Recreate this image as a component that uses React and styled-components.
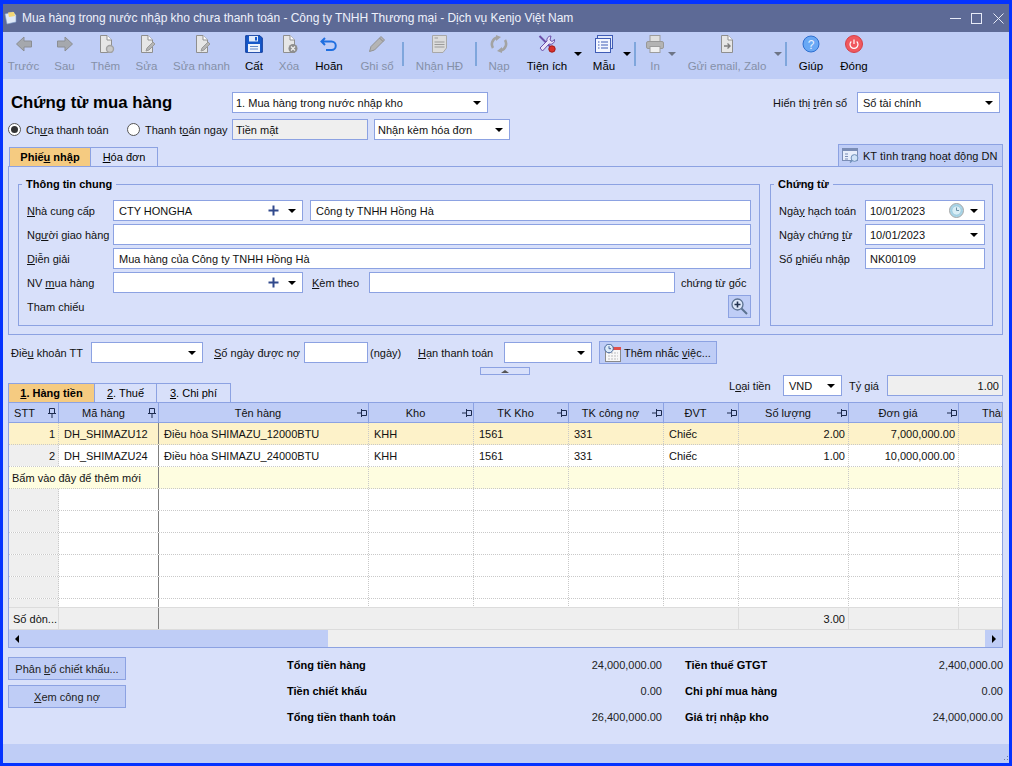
import React from 'react';
import styled, { createGlobalStyle } from 'styled-components';

const line = '#8ca2e2';
const soft = '#bfcdf6';
const pale = '#d8e0fa';

const GlobalStyle = createGlobalStyle`
  html, body { margin: 0; padding: 0; background: #0433ff; overflow: hidden; }
  body { font-family: "Liberation Sans", Arial, sans-serif; font-size: 11px; color: #111; }
  * { box-sizing: border-box; }
  u { text-underline-offset: 1px; }
`;

const Page = styled.div`
  width: 1012px;
  height: 766px;
  display: flex;
  flex-direction: column;
  border-style: solid;
  border-color: #0433ff;
  border-width: 4px 3px 3px 3px;
  background: ${pale};
`;

const TitleBar = styled.div`
  height: 28px;
  flex: none;
  display: flex;
  align-items: center;
  padding-left: 1px;
  background: #5d6a96;
  color: #eef1fb;
  font-size: 12px;
`;

const TitleText = styled.div`
  margin-left: 4px;
  flex: 1;
  white-space: nowrap;
  letter-spacing: -0.03px;
`;

const WinButton = styled.div`
  width: ${(p) => p.$w}px;
  display: flex;
  justify-content: center;
  align-items: center;
`;

const Toolbar = styled.div`
  height: 47px;
  flex: none;
  display: flex;
  align-items: flex-start;
  background: ${soft};
`;

const Tool = styled.div`
  width: ${(p) => p.$w}px;
  flex: none;
  margin-left: ${(p) => p.$ml || 0}px;
  display: flex;
  flex-direction: column;
  align-items: center;
  padding-top: 3px;
  color: ${(p) => (p.$off ? '#8590a8' : '#000')};
  white-space: nowrap;
`;

const ToolLabel = styled.span`
  margin-top: 6px;
  line-height: 15px;
  font-size: 11.5px;
`;

const ToolCaret = styled.div`
  width: 10px;
  flex: none;
  margin-left: ${(p) => p.$ml || 0}px;
  padding-top: 20px;
  display: flex;
  justify-content: center;
`;

const ToolSep = styled.div`
  width: 2px;
  height: 24px;
  flex: none;
  margin-top: 10px;
  margin-left: ${(p) => p.$ml || 0}px;
  background: #7fa6dc;
`;

const Caret = styled.span`
  width: 0;
  height: 0;
  flex: none;
  border-left: 4px solid transparent;
  border-right: 4px solid transparent;
  border-top: 4px solid ${(p) => p.$color || '#000'};
`;

const Body = styled.div`
  flex: 1;
  display: flex;
  flex-direction: column;
  padding: 0 6px 0 5px;
`;

const HeadRow = styled.div`
  height: 21px;
  flex: none;
  margin-top: ${(p) => p.$mt}px;
  display: flex;
  align-items: center;
`;

const DocTitle = styled.h1`
  width: 224px;
  margin: 0;
  padding-left: 3px;
  font-size: 16.8px;
  font-weight: 700;
  color: #000;
  white-space: nowrap;
`;

const Text = styled.span`
  width: ${(p) => (p.$w ? `${p.$w}px` : 'auto')};
  flex: none;
  margin-left: ${(p) => p.$ml || 0}px;
  white-space: nowrap;
`;

const Box = styled.div`
  width: ${(p) => p.$w}px;
  height: 21px;
  flex: none;
  margin-left: ${(p) => p.$ml || 0}px;
  display: flex;
  align-items: center;
  justify-content: ${(p) => (p.$right ? 'flex-end' : 'flex-start')};
  padding: 0 ${(p) => (p.$right ? 3 : 6)}px 0 ${(p) => (p.$pad === undefined ? 5 : p.$pad)}px;
  border: 1px solid ${line};
  background: ${(p) => (p.$gray ? '#efefef' : '#fff')};
  white-space: nowrap;
`;

const BoxText = styled.span`
  flex: 1;
`;

const BoxIcon = styled.span`
  display: flex;
  margin-right: ${(p) => p.$mr}px;
`;

const Radio = styled.span`
  width: 13px;
  height: 13px;
  flex: none;
  margin-left: ${(p) => p.$ml || 0}px;
  margin-right: 5px;
  border-radius: 50%;
  border: 1px solid #555;
  background: #fff;
  display: flex;
  align-items: center;
  justify-content: center;
  &::after {
    content: '';
    width: 7px;
    height: 7px;
    border-radius: 50%;
    background: ${(p) => (p.$on ? '#333' : 'transparent')};
  }
`;

const TabBar = styled.div`
  height: ${(p) => p.$h}px;
  flex: none;
  margin-top: ${(p) => p.$mt || 0}px;
  display: flex;
  align-items: flex-end;
`;

const Tab = styled.div`
  width: ${(p) => p.$w}px;
  height: 19px;
  flex: none;
  margin-left: ${(p) => p.$ml || 0}px;
  display: flex;
  align-items: center;
  justify-content: center;
  border: 1px solid ${line};
  border-bottom: 0;
  border-left-width: ${(p) => (p.$first ? 1 : 0)}px;
  background: ${(p) => (p.$on ? '#f5cb81' : 'transparent')};
  font-weight: ${(p) => (p.$on ? 700 : 400)};
  color: #000;
  white-space: nowrap;
`;

const KtButton = styled.div`
  width: 165px;
  height: 22px;
  margin-left: auto;
  display: flex;
  align-items: center;
  gap: 3px;
  padding-left: 3px;
  border: 1px solid ${line};
  border-bottom: 0;
  background: ${soft};
  white-space: nowrap;
`;

const Panel = styled.div`
  height: 169px;
  flex: none;
  display: flex;
  gap: 10px;
  padding: 10px 9px 0;
  border: 1px solid ${line};
`;

const Group = styled.fieldset`
  width: ${(p) => p.$w}px;
  height: 149px;
  flex: none;
  margin: 0;
  padding: 9px 8px 0;
  min-width: 0;
  border: 1px solid ${line};
`;

const Legend = styled.legend`
  margin-left: -5px;
  padding: 0 4px;
  line-height: 14px;
  font-weight: 700;
  color: #000;
`;

const FieldRow = styled.div`
  height: 21px;
  display: flex;
  align-items: center;
  margin-bottom: 3px;
`;

const RefRow = styled.div`
  height: 23px;
  margin-top: -1px;
  display: flex;
  align-items: center;
  justify-content: space-between;
`;

const ZoomBtn = styled.div`
  width: 23px;
  height: 23px;
  display: flex;
  align-items: center;
  justify-content: center;
  border: 1px solid ${line};
  background: ${soft};
`;

const TermsRow = styled.div`
  height: 21px;
  flex: none;
  margin-top: 7px;
  display: flex;
  align-items: center;
`;

const RemindBtn = styled.div`
  width: 118px;
  height: 23px;
  flex: none;
  margin-left: 7px;
  display: flex;
  align-items: center;
  gap: 3px;
  padding-left: 4px;
  border: 1px solid ${line};
  background: ${soft};
  white-space: nowrap;
`;

const Splitter = styled.div`
  width: 50px;
  height: 8px;
  flex: none;
  margin: 4px 0 0 472px;
  display: flex;
  align-items: center;
  justify-content: center;
  border: 1px solid ${line};
  &::after {
    content: '';
    border-left: 4px solid transparent;
    border-right: 4px solid transparent;
    border-bottom: 3px solid #555;
  }
`;

const RateRow = styled.div`
  margin-left: auto;
  align-self: flex-start;
  display: flex;
  align-items: center;
  height: 21px;
`;

const GridBox = styled.div`
  height: 246px;
  flex: none;
  display: flex;
  flex-direction: column;
  border: 1px solid ${line};
  background: #fff;
  overflow: hidden;
`;

const columns = '50px 100px 210px 105px 95px 95px 75px 110px 110px 43px';

const HeadGrid = styled.div`
  height: 20px;
  flex: none;
  display: grid;
  grid-template-columns: ${columns};
  background: ${soft};
  border-bottom: 1px solid ${line};
`;

const HeadCell = styled.div`
  display: flex;
  align-items: center;
  justify-content: space-between;
  padding: 0 ${(p) => (p.$pinned ? 2 : 1)}px 0 0;
  border-right: 1px solid ${line};
  overflow: hidden;
  &:last-child { border-right: 0; }
`;

const HeadLabel = styled.span`
  flex: ${(p) => (p.$clip ? 'none' : 1)};
  width: ${(p) => (p.$clip ? '98px' : 'auto')};
  text-align: center;
  padding-right: ${(p) => p.$pr || 0}px;
  white-space: nowrap;
`;

const RowsArea = styled.div`
  height: 184px;
  flex: none;
  overflow: hidden;
`;

const DataRow = styled.div`
  height: 22px;
  display: grid;
  grid-template-columns: ${columns};
  border-bottom: 1px dotted #c9c9c9;
  background: ${(p) => p.$bg || '#fff'};
`;

const Cell = styled.div`
  display: flex;
  align-items: center;
  justify-content: ${(p) => (p.$right ? 'flex-end' : 'flex-start')};
  padding: 0 ${(p) => (p.$right ? 3 : 0)}px 0 ${(p) => (p.$right ? 0 : p.$pl || 5)}px;
  border-right: 1px ${(p) => (p.$frozen ? 'solid #7f7f7f' : 'dotted #c9c9c9')};
  background: ${(p) => p.$bg || 'transparent'};
  grid-column: ${(p) => (p.$span ? `span ${p.$span}` : 'auto')};
  white-space: nowrap;
  &:last-child { border-right: 0; }
`;

const TotalRow = styled.div`
  height: 22px;
  flex: none;
  display: grid;
  grid-template-columns: 50px 100px 580px 110px 110px 43px;
  border-top: 1px solid #dcdcdc;
  background: #efefef;
`;

const TotalCell = styled.div`
  display: flex;
  align-items: center;
  justify-content: ${(p) => (p.$right ? 'flex-end' : 'flex-start')};
  padding: 0 3px 0 ${(p) => (p.$right ? 0 : 4)}px;
  border-right: 1px solid ${(p) => (p.$frozen ? '#7f7f7f' : '#dcdcdc')};
  white-space: nowrap;
  &:last-child { border-right: 0; }
`;

const ScrollBar = styled.div`
  height: 18px;
  flex: none;
  display: flex;
  border-top: 1px solid #dcdcdc;
  background: #efefef;
`;

const ScrollThumb = styled.div`
  width: 319px;
  display: flex;
  align-items: center;
  padding-left: 6px;
  background: ${soft};
`;

const ScrollEnd = styled.div`
  width: 17px;
  margin-left: auto;
  display: flex;
  align-items: center;
  justify-content: center;
  background: ${soft};
`;

const ArrowSide = styled.span`
  width: 0;
  height: 0;
  border-top: 4px solid transparent;
  border-bottom: 4px solid transparent;
  ${(p) => (p.$left ? 'border-right: 4px solid #000;' : 'border-left: 4px solid #000;')}
`;

const Bottom = styled.div`
  height: 96px;
  flex: none;
  display: flex;
  align-items: flex-start;
`;

const SideButtons = styled.div`
  width: 118px;
  flex: none;
  display: flex;
  flex-direction: column;
  gap: 5px;
  padding-top: 9px;
`;

const SideButton = styled.div`
  height: 23px;
  display: flex;
  align-items: center;
  justify-content: center;
  border: 1px solid ${line};
  background: ${soft};
  color: #222;
  white-space: nowrap;
`;

const Summary = styled.div`
  margin-left: 161px;
  padding-top: 4px;
  display: grid;
  grid-template-columns: 375px 318px;
  column-gap: 23px;
`;

const SummaryItem = styled.div`
  height: 26px;
  display: flex;
  align-items: center;
  justify-content: space-between;
  color: #222;
  b { color: #000; }
`;

const Footer = styled.div`
  height: 19px;
  flex: none;
  display: flex;
  justify-content: flex-end;
  align-items: flex-end;
  background: ${soft};
`;

const U = ({ children }) => <u>{children}</u>;

const Arrow = ({ flip }) => (
  <svg width="18" height="18" viewBox="0 0 18 18" style={{ transform: flip ? 'scaleX(-1)' : 'none' }}>
    <path d="M1.5 9 L9 2 V6 H16.5 V12 H9 V16 Z" fill="#a5a8ad" stroke="#8b8e93" />
  </svg>
);

const page = 'M3.5 .5 H10 L14.5 5 V17.5 H3.5 Z';
const Doc = ({ children }) => (
  <svg width="18" height="18" viewBox="0 0 18 18">
    <path d={page} fill="#e6e6e6" stroke="#8f8f8f" />
    <path d="M10 .5 V5 H14.5" fill="#fff" stroke="#8f8f8f" />
    {children}
  </svg>
);

const AddIcon = () => (
  <Doc>
    <circle cx="13" cy="14" r="3.5" fill="#c9c9c9" stroke="#a2a2a2" strokeWidth="1.4" />
  </Doc>
);

const EditIcon = () => (
  <Doc>
    <path d="M8 16 L9 13 L15 7 L17 9 L11 15 Z" fill="#b5b5b5" stroke="#9a9a9a" />
  </Doc>
);

const DeleteIcon = () => (
  <Doc>
    <circle cx="13" cy="13.5" r="4.5" fill="#8e8e8e" />
    <path d="M11 11.5 L15 15.5 M15 11.5 L11 15.5" stroke="#eee" strokeWidth="1.3" />
  </Doc>
);

const SaveIcon = () => (
  <svg width="18" height="18" viewBox="0 0 18 18">
    <path d="M.7 .7 H15 L17.3 3 V17.3 H.7 Z" fill="#1658c9" stroke="#0d3a9a" />
    <rect x="4" y="1" width="9" height="5.5" fill="#dfe9fa" />
    <rect x="10" y="2" width="2" height="3.5" fill="#1658c9" />
    <rect x="3" y="9" width="12" height="8" fill="#eef3fc" />
    <path d="M5 11.5 H13 M5 14 H13" stroke="#5f86c9" />
  </svg>
);

const UndoIcon = () => (
  <svg width="18" height="18" viewBox="0 0 18 18">
    <path d="M5 3 L1.5 6.5 L5 10 M2 6.5 H11.5 A4.2 4.2 0 0 1 11.5 15 H6" fill="none" stroke="#1f6fe0" strokeWidth="2" />
  </svg>
);

const PencilIcon = () => (
  <svg width="18" height="18" viewBox="0 0 18 18">
    <path d="M1.5 16.5 L3 11.5 L13 1.5 L16.5 5 L6.5 15 Z" fill="#b4b4b4" stroke="#929292" />
    <path d="M11.5 3 L15 6.5" stroke="#8a8a8a" />
  </svg>
);

const InvoiceIcon = () => (
  <svg width="18" height="18" viewBox="0 0 18 18">
    <path d="M1.5 .5 H15.5 V13 L12 17.5 H1.5 Z" fill="#dcdcdc" stroke="#a8a8a8" />
    <path d="M3.5 3 H7 M3.5 7 H13.5 M3.5 9.5 H13.5 M3.5 12 H13.5" stroke="#9a9a9a" />
  </svg>
);

const ReloadIcon = () => (
  <svg width="18" height="18" viewBox="0 0 18 18">
    <path d="M3 13 A7 7 0 0 1 7 2.5 M15 5 A7 7 0 0 1 11 15.5" fill="none" stroke="#a3a3a3" strokeWidth="2.6" />
    <path d="M6 0 V6 L11 2 Z M12 18 V12 L7 16 Z" fill="#a3a3a3" />
  </svg>
);

const ToolsIcon = () => (
  <svg width="18" height="18" viewBox="0 0 18 18">
    <path d="M1.5 1 L4 3.5 L15 14.5" stroke="#6b4fa8" strokeWidth="2" fill="none" />
    <path d="M13 1 A4 4 0 0 0 9 6 L2 13 L4.5 16 L11 9 A4 4 0 0 0 16.5 4.5 L14 6.5 L12 5 Z" fill="#e8e4f8" stroke="#6b4fa8" />
    <circle cx="14" cy="14" r="3.2" fill="#d9302c" stroke="#a11d1a" />
  </svg>
);

const TemplateIcon = () => (
  <svg width="18" height="18" viewBox="0 0 18 18">
    <rect x="2.5" y=".5" width="15" height="13" fill="#dfe7fb" stroke="#3f5cb5" />
    <rect x=".5" y="3.5" width="15" height="14" fill="#f3f6ff" stroke="#3f5cb5" />
    <path d="M3 7 H4.5 M3 10 H4.5 M3 13 H4.5 M6 7 H13 M6 10 H13 M6 13 H13" stroke="#3f5cb5" />
  </svg>
);

const PrintIcon = () => (
  <svg width="18" height="18" viewBox="0 0 18 18">
    <rect x="4" y=".5" width="10" height="6" fill="#dfdfdf" stroke="#9c9c9c" />
    <rect x=".5" y="6.5" width="17" height="7" rx="1.5" fill="#b3b3b3" stroke="#989898" />
    <rect x="4" y="11.5" width="10" height="6" fill="#efefef" stroke="#9c9c9c" />
  </svg>
);

const SendIcon = () => (
  <Doc>
    <path d="M6 11 H12 M9.5 8.5 L12 11 L9.5 13.5" fill="none" stroke="#7d7d7d" strokeWidth="1.4" />
  </Doc>
);

const HelpIcon = () => (
  <svg width="18" height="18" viewBox="0 0 18 18">
    <circle cx="9" cy="9" r="8" fill="#69a8f5" stroke="#2e6fd0" />
    <text x="9" y="13.5" textAnchor="middle" fontSize="12" fill="#e8f2ff" fontFamily="Liberation Sans">?</text>
  </svg>
);

const PowerIcon = () => (
  <svg width="18" height="18" viewBox="0 0 18 18">
    <circle cx="9" cy="9" r="8.5" fill="#f0585e" stroke="#d53f46" />
    <path d="M6.3 6.5 A4 4 0 1 0 11.7 6.5 M9 4.5 V9" fill="none" stroke="#fff" strokeWidth="1.2" />
  </svg>
);

const AppIcon = () => (
  <svg width="14" height="14" viewBox="0 0 14 14">
    <path d="M1 3 L9 1 L12 4 L12 11 L3 13 Z" fill="#dfe9f7" stroke="#7f9cc9" strokeWidth=".6" />
    <path d="M4 1.5 L10 1 L11 5 L5 6 Z" fill="#f4d774" />
  </svg>
);

const Plus = () => (
  <svg width="11" height="11" viewBox="0 0 11 11">
    <path d="M5.5 .5 V10.5 M.5 5.5 H10.5" stroke="#31498c" strokeWidth="2" />
  </svg>
);

const ClockIcon = () => (
  <svg width="15" height="15" viewBox="0 0 15 15">
    <circle cx="7.5" cy="7.5" r="7" fill="#a9d6e8" stroke="#a8a8a8" />
    <circle cx="7.5" cy="7.5" r="4.6" fill="#d9eef6" stroke="#8fbdd2" strokeWidth=".6" />
    <path d="M7.5 4.5 V7.5 H10" fill="none" stroke="#6a8fa5" />
  </svg>
);

const LookupIcon = () => (
  <svg width="18" height="15" viewBox="0 0 18 15">
    <rect x=".5" y=".5" width="15" height="12" fill="#e8eefb" stroke="#7b8db5" />
    <rect x=".5" y=".5" width="15" height="2.5" fill="#7b8db5" />
    <path d="M3 6 H6 M3 8.5 H6 M3 11 H6" stroke="#7b8db5" />
    <circle cx="12.5" cy="10" r="3.4" fill="#cfe2f7" stroke="#6f8fb8" />
    <path d="M10 12.5 L8 14.5" stroke="#6f8fb8" strokeWidth="1.5" />
  </svg>
);

const MagnifyIcon = () => (
  <svg width="17" height="17" viewBox="0 0 17 17">
    <circle cx="6.5" cy="6.5" r="5.5" fill="#dce6f8" stroke="#5c7291" strokeWidth="1.3" />
    <path d="M6.5 3.5 V9.5 M3.5 6.5 H9.5" stroke="#22324f" strokeWidth="1.6" />
    <path d="M10.5 10.5 L16 16" stroke="#5c7291" strokeWidth="2" />
  </svg>
);

const CalendarIcon = () => (
  <svg width="17" height="18" viewBox="0 0 17 18">
    <rect x="1.5" y="3.5" width="15" height="14" fill="#f8f8f8" stroke="#8a8a8a" />
    <rect x="6" y="3" width="11" height="3" fill="#e0504c" />
    <path d="M4 9 H14 M4 12 H14 M4 15 H14" stroke="#bdbdbd" strokeDasharray="2 1" />
    <circle cx="5" cy="4.5" r="4.3" fill="#dcebf8" stroke="#44659a" />
    <path d="M5 2.2 V4.7 H7" fill="none" stroke="#44659a" />
  </svg>
);

const PinV = () => (
  <svg width="8" height="10" viewBox="0 0 8 10">
    <path d="M1.5 .5 H6.5 V5.5 H1.5 Z M0 5.5 H8 M4 6 V10" fill="none" stroke="#1d2b4f" />
  </svg>
);

const PinH = () => (
  <svg width="10" height="8" viewBox="0 0 10 8">
    <path d="M4.5 1.5 H9.5 V6.5 H4.5 Z M4.5 0 V8 M4 4 H0" fill="none" stroke="#1d2b4f" />
  </svg>
);

const Grip = () => (
  <svg width="8" height="8" viewBox="0 0 8 8">
    <path d="M6 1 h1 v1 h-1 z M3 4 h1 v1 h-1 z M6 4 h1 v1 h-1 z" fill="#6b7a9f" />
  </svg>
);

const heads = [
  ['STT', 'v', 8],
  ['Mã hàng', 'v', 0],
  ['Tên hàng', 'h', 0],
  ['Kho', 'h', 0],
  ['TK Kho', 'h', 0],
  ['TK công nợ', 'h', 0],
  ['ĐVT', 'h', 0],
  ['Số lượng', 'h', 0],
  ['Đơn giá', 'h', 0],
  ['Thành tiền', '', 0],
];

const items = [
  { stt: 1, code: 'DH_SHIMAZU12', name: 'Điều hòa SHIMAZU_12000BTU', qty: '2.00', price: '7,000,000.00' },
  { stt: 2, code: 'DH_SHIMAZU24', name: 'Điều hòa SHIMAZU_24000BTU', qty: '1.00', price: '10,000,000.00' },
];

const ItemRow = ({ item, bg, sttBg }) => (
  <DataRow $bg={bg}>
    <Cell $right $bg={sttBg}>{item.stt}</Cell>
    <Cell $frozen>{item.code}</Cell>
    <Cell>{item.name}</Cell>
    <Cell>KHH</Cell>
    <Cell>1561</Cell>
    <Cell>331</Cell>
    <Cell>Chiếc</Cell>
    <Cell $right>{item.qty}</Cell>
    <Cell $right>{item.price}</Cell>
    <Cell />
  </DataRow>
);

const EmptyRow = () => (
  <DataRow>
    <Cell $bg="#efefef" />
    <Cell $frozen />
    <Cell />
    <Cell />
    <Cell />
    <Cell />
    <Cell />
    <Cell />
    <Cell />
    <Cell />
  </DataRow>
);

export default function App() {
  return (
    <Page>
      <GlobalStyle />
      <TitleBar>
        <AppIcon />
        <TitleText>Mua hàng trong nước nhập kho chưa thanh toán - Công ty TNHH Thương mại - Dịch vụ Kenjo Việt Nam</TitleText>
        <WinButton $w={22}>
          <svg width="11" height="11"><path d="M0 5.5 H11" stroke="#e6eaf7" /></svg>
        </WinButton>
        <WinButton $w={21}>
          <svg width="11" height="11"><rect x=".5" y=".5" width="10" height="10" fill="none" stroke="#e6eaf7" /></svg>
        </WinButton>
        <WinButton $w={22}>
          <svg width="11" height="11"><path d="M.5 .5 L10.5 10.5 M10.5 .5 L.5 10.5" stroke="#e6eaf7" /></svg>
        </WinButton>
      </TitleBar>

      <Toolbar>
        <Tool $w={41} $off><Arrow /><ToolLabel>Trước</ToolLabel></Tool>
        <Tool $w={41} $off><Arrow flip /><ToolLabel>Sau</ToolLabel></Tool>
        <Tool $w={41} $off><AddIcon /><ToolLabel>Thêm</ToolLabel></Tool>
        <Tool $w={41} $off><EditIcon /><ToolLabel>Sửa</ToolLabel></Tool>
        <Tool $w={69} $off><EditIcon /><ToolLabel>Sửa nhanh</ToolLabel></Tool>
        <Tool $w={36}><SaveIcon /><ToolLabel>Cất</ToolLabel></Tool>
        <Tool $w={34} $off><DeleteIcon /><ToolLabel>Xóa</ToolLabel></Tool>
        <Tool $w={46}><UndoIcon /><ToolLabel>Hoãn</ToolLabel></Tool>
        <Tool $w={50} $off><PencilIcon /><ToolLabel>Ghi sổ</ToolLabel></Tool>
        <ToolSep />
        <Tool $w={71} $off><InvoiceIcon /><ToolLabel>Nhận HĐ</ToolLabel></Tool>
        <ToolSep />
        <Tool $w={44} $off><ReloadIcon /><ToolLabel>Nạp</ToolLabel></Tool>
        <Tool $w={52}><ToolsIcon /><ToolLabel>Tiện ích</ToolLabel></Tool>
        <ToolCaret><Caret /></ToolCaret>
        <Tool $w={42}><TemplateIcon /><ToolLabel>Mẫu</ToolLabel></Tool>
        <ToolCaret $ml={-3}><Caret /></ToolCaret>
        <ToolSep $ml={2} />
        <Tool $w={30} $ml={4} $off><PrintIcon /><ToolLabel>In</ToolLabel></Tool>
        <ToolCaret $ml={-3}><Caret $color="#6d7485" /></ToolCaret>
        <Tool $w={100} $off><SendIcon /><ToolLabel>Gửi email, Zalo</ToolLabel></Tool>
        <ToolCaret $ml={-4}><Caret $color="#6d7485" /></ToolCaret>
        <ToolSep $ml={2} />
        <Tool $w={48}><HelpIcon /><ToolLabel>Giúp</ToolLabel></Tool>
        <Tool $w={38}><PowerIcon /><ToolLabel>Đóng</ToolLabel></Tool>
      </Toolbar>

      <Body>
        <HeadRow $mt={13}>
          <DocTitle>Chứng từ mua hàng</DocTitle>
          <Box $w={256} $pad={3}><BoxText>1. Mua hàng trong nước nhập kho</BoxText><Caret /></Box>
          <Text $ml={285} $w={84}>Hiển thị <U>t</U>rên sổ</Text>
          <Box $w={143}><BoxText>Sổ tài chính</BoxText><Caret /></Box>
        </HeadRow>

        <HeadRow $mt={6}>
          <Radio $on />
          <Text $w={101}>Ch<U>ư</U>a thanh toán</Text>
          <Radio />
          <Text $w={87}>Thanh t<U>o</U>án ngay</Text>
          <Box $w={136} $gray $pad={3}>Tiền mặt</Box>
          <Box $w={136} $ml={6} $pad={3}><BoxText>Nhận kèm hóa đơn</BoxText><Caret /></Box>
        </HeadRow>

        <TabBar $h={22} $mt={4}>
          <Tab $w={82} $ml={1} $first $on><span>Phiế<U>u</U> nhập</span></Tab>
          <Tab $w={67}><span><U>H</U>óa đơn</span></Tab>
          <KtButton><LookupIcon /><span>KT tình trạng hoạt động DN</span></KtButton>
        </TabBar>

        <Panel>
          <Group $w={742}>
            <Legend>Thông tin chung</Legend>
            <FieldRow>
              <Text $w={86}><U>N</U>hà cung cấp</Text>
              <Box $w={190}>
                <BoxText>CTY HONGHA</BoxText>
                <BoxIcon $mr={9}><Plus /></BoxIcon>
                <Caret />
              </Box>
              <Box $w={441} $ml={7}>Công ty TNHH Hồng Hà</Box>
            </FieldRow>
            <FieldRow>
              <Text $w={86}>Ng<U>ư</U>ời giao hàng</Text>
              <Box $w={638} />
            </FieldRow>
            <FieldRow>
              <Text $w={86}><U>D</U>iễn giải</Text>
              <Box $w={638}>Mua hàng của Công ty TNHH Hồng Hà</Box>
            </FieldRow>
            <FieldRow>
              <Text $w={86}>NV <U>m</U>ua hàng</Text>
              <Box $w={190}>
                <BoxText />
                <BoxIcon $mr={9}><Plus /></BoxIcon>
                <Caret />
              </Box>
              <Text $w={57} $ml={9}><U>K</U>èm theo</Text>
              <Box $w={306} />
              <Text $ml={6}>chứng từ gốc</Text>
            </FieldRow>
            <RefRow>
              <Text>Tham chiếu</Text>
              <ZoomBtn><MagnifyIcon /></ZoomBtn>
            </RefRow>
          </Group>

          <Group $w={223}>
            <Legend>Chứng từ</Legend>
            <FieldRow>
              <Text $w={86}>Ngà<U>y</U> hạch toán</Text>
              <Box $w={120} $pad={4}>
                <BoxText>10/01/2023</BoxText>
                <BoxIcon $mr={6}><ClockIcon /></BoxIcon>
                <Caret />
              </Box>
            </FieldRow>
            <FieldRow>
              <Text $w={86}>Ngày chứng <U>t</U>ừ</Text>
              <Box $w={120} $pad={4}><BoxText>10/01/2023</BoxText><Caret /></Box>
            </FieldRow>
            <FieldRow>
              <Text $w={86}>Số <U>p</U>hiếu nhập</Text>
              <Box $w={120} $pad={4}>NK00109</Box>
            </FieldRow>
          </Group>
        </Panel>

        <TermsRow>
          <Text $w={80} $ml={3}>Điề<U>u</U> khoản TT</Text>
          <Box $w={112}><BoxText /><Caret /></Box>
          <Text $w={90} $ml={11}><U>S</U>ố ngày được nợ</Text>
          <Box $w={64} />
          <Text $w={48} $ml={2}>(ngày)</Text>
          <Text $w={86}><U>H</U>ạn thanh toán</Text>
          <Box $w={88}><BoxText /><Caret /></Box>
          <RemindBtn><CalendarIcon /><span>Thêm nhắc <U>v</U>iệc...</span></RemindBtn>
        </TermsRow>

        <Splitter />

        <TabBar $h={27}>
          <Tab $w={87} $first $on><span><U>1</U>. Hàng tiền</span></Tab>
          <Tab $w={62}><span><U>2</U>. Thuế</span></Tab>
          <Tab $w={74}><span><U>3</U>. Chi phí</span></Tab>
          <RateRow>
            <Text $w={54}>L<U>o</U>ại tiền</Text>
            <Box $w={59}><BoxText>VND</BoxText><Caret /></Box>
            <Text $w={38} $ml={7}>Tỷ <U>g</U>iá</Text>
            <Box $w={116} $gray $right>1.00</Box>
          </RateRow>
        </TabBar>

        <GridBox>
          <HeadGrid>
            {heads.map(([label, pin, pr]) => (
              <HeadCell key={label} $pinned={pin === 'v'}>
                <HeadLabel $pr={pr} $clip={!pin}>{label}</HeadLabel>
                {pin === 'v' && <PinV />}
                {pin === 'h' && <PinH />}
              </HeadCell>
            ))}
          </HeadGrid>
          <RowsArea>
            <ItemRow item={items[0]} bg="#fdf2c9" />
            <ItemRow item={items[1]} sttBg="#efefef" />
            <DataRow $bg="#fefde0">
              <Cell $span={2} $frozen $pl={3}>Bấm vào đây để thêm mới</Cell>
              <Cell />
              <Cell />
              <Cell />
              <Cell />
              <Cell />
              <Cell />
              <Cell />
              <Cell />
            </DataRow>
            {[0, 1, 2, 3, 4, 5].map((n) => <EmptyRow key={n} />)}
          </RowsArea>
          <TotalRow>
            <TotalCell>Số dòn...</TotalCell>
            <TotalCell $frozen />
            <TotalCell />
            <TotalCell $right>3.00</TotalCell>
            <TotalCell />
            <TotalCell />
          </TotalRow>
          <ScrollBar>
            <ScrollThumb><ArrowSide $left /></ScrollThumb>
            <ScrollEnd><ArrowSide /></ScrollEnd>
          </ScrollBar>
        </GridBox>

        <Bottom>
          <SideButtons>
            <SideButton><span>Phân <U>b</U>ổ chiết khấu...</span></SideButton>
            <SideButton><span><U>X</U>em công nợ</span></SideButton>
          </SideButtons>
          <Summary>
            <SummaryItem><b>Tổng tiền hàng</b><span>24,000,000.00</span></SummaryItem>
            <SummaryItem><b>Tiền thuế GTGT</b><span>2,400,000.00</span></SummaryItem>
            <SummaryItem><b>Tiền chiết khấu</b><span>0.00</span></SummaryItem>
            <SummaryItem><b>Chi phí mua hàng</b><span>0.00</span></SummaryItem>
            <SummaryItem><b>Tổng tiền thanh toán</b><span>26,400,000.00</span></SummaryItem>
            <SummaryItem><b>Giá trị nhập kho</b><span>24,000,000.00</span></SummaryItem>
          </Summary>
        </Bottom>
      </Body>
      <Footer><Grip /></Footer>
    </Page>
  );
}
